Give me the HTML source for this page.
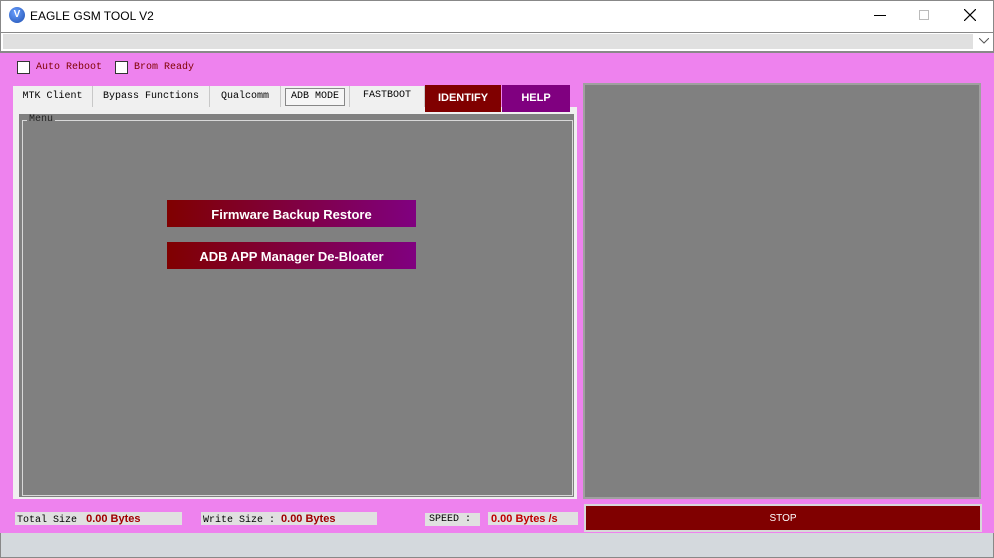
<!DOCTYPE html>
<html><head><style>
*{margin:0;padding:0;box-sizing:border-box}
body{width:994px;height:558px;position:relative;overflow:hidden;background:#ee82ee;font-family:"Liberation Sans",sans-serif}
.a{position:absolute}
.mono{font-family:"Liberation Mono",monospace;font-size:10px}
.tab{position:absolute;top:86px;height:21px;background:#f0f0f0;border-right:1px solid #c8c8c8;font-family:"Liberation Mono",monospace;font-size:10px;line-height:20px;text-align:center;color:#000;padding-top:0}
.btn{position:absolute;left:167px;width:249px;height:27px;background:linear-gradient(90deg,#800000,#800080);color:#fff;font-weight:bold;font-size:13px;text-align:center;line-height:29px}
.lbl{position:absolute;background:#e0e0e0;height:13px;font-family:"Liberation Mono",monospace;font-size:10px;line-height:14px;padding-left:2px}
.r{color:#a00000;font-family:"Liberation Sans",sans-serif;font-weight:bold;font-size:11px}
</style></head><body>
<div class="a" style="left:0;top:0;width:994px;height:32px;background:#fff;border:1px solid #888;border-bottom:none"></div>
<div class="a" style="left:9px;top:7px;width:16px;height:16px;border-radius:50%;background:radial-gradient(circle at 40% 35%,#6aa0ff,#1f4fb0);color:#fff;font-size:10px;font-weight:bold;text-align:center;line-height:16px">V</div>
<div class="a" style="left:30px;top:9px;font-size:12px;color:#000">EAGLE GSM TOOL V2</div>
<div class="a" style="left:874px;top:15px;width:12px;height:1px;background:#000"></div>
<div class="a" style="left:919px;top:10px;width:10px;height:10px;border:1px solid #bbb"></div>
<svg class="a" style="left:964px;top:9px" width="12" height="12"><path d="M0 0L12 12M12 0L0 12" stroke="#000" stroke-width="1.2"/></svg>
<div class="a" style="left:0;top:32px;width:994px;height:20px;background:#fff;border:1px solid #888"></div>
<div class="a" style="left:3px;top:34px;width:970px;height:15px;background:#e0e0e0"></div>
<svg class="a" style="left:979px;top:38px" width="10" height="6"><path d="M0 0L5 5L10 0" stroke="#555" fill="none"/></svg>
<div class="a" style="left:0;top:52px;width:994px;height:1px;background:#888"></div>
<div class="a" style="left:17px;top:61px;width:13px;height:13px;background:#fff;border:1px solid #333"></div>
<div class="a mono" style="left:36px;top:62px;color:#800000">Auto Reboot</div>
<div class="a" style="left:115px;top:61px;width:13px;height:13px;background:#fff;border:1px solid #333"></div>
<div class="a mono" style="left:134px;top:62px;color:#800000">Brom Ready</div>
<div class="a" style="left:13px;top:107px;width:564px;height:392px;background:#f0f0f0"></div>
<div class="tab" style="left:13px;width:80px;line-height:21px">MTK Client</div>
<div class="tab" style="left:93px;width:117px;line-height:21px">Bypass Functions</div>
<div class="tab" style="left:210px;width:71px;line-height:21px">Qualcomm</div>
<div class="tab" style="left:281px;width:69px"><span style="display:inline-block;margin-top:2px;border:1px solid #888;background:#f6f6f6;line-height:16px;padding:0 5px">ADB MODE</span></div>
<div class="tab" style="left:350px;width:75px;line-height:20px">FASTBOOT</div>
<div class="a" style="left:425px;top:85px;width:76px;height:27px;background:#800000;color:#fff;font-weight:bold;font-size:11px;text-align:center;line-height:27px">IDENTIFY</div>
<div class="a" style="left:502px;top:85px;width:68px;height:27px;background:#800080;color:#fff;font-weight:bold;font-size:11px;text-align:center;line-height:27px">HELP</div>
<div class="a" style="left:19px;top:114px;width:555px;height:383px;background:#808080"></div>
<div class="a" style="left:22px;top:120px;width:551px;height:376px;border:1px solid #d8d8d8"></div>
<div class="a mono" style="left:27px;top:114px;background:#808080;padding:0 2px;font-size:10px;color:#222">Menu</div>
<div class="btn" style="top:200px">Firmware Backup Restore</div>
<div class="btn" style="top:242px">ADB APP Manager De-Bloater</div>
<div class="a" style="left:583px;top:83px;width:398px;height:416px;background:#808080;border:2px solid #a0a0a0"></div>
<div class="lbl" style="left:15px;top:512px;width:167px">Total Size <span class="r">&nbsp;0.00 Bytes</span></div>
<div class="lbl" style="left:201px;top:512px;width:176px">Write Size : <span class="r">0.00 Bytes</span></div>
<div class="lbl" style="left:425px;top:513px;width:55px;padding-left:4px">SPEED :</div>
<div class="lbl" style="left:488px;top:512px;width:90px;padding-left:3px"><span class="r" style="color:#c00000">0.00 Bytes /s</span></div>
<div class="a" style="left:584px;top:504px;width:398px;height:28px;background:#800000;border:2px solid #d8d8d8;color:#fff;font-size:10px;text-align:center;line-height:25px">STOP</div>
<div class="a" style="left:0;top:533px;width:994px;height:25px;background:#d4d9dd;border:1px solid #888;border-top:none"></div>
</body></html>
